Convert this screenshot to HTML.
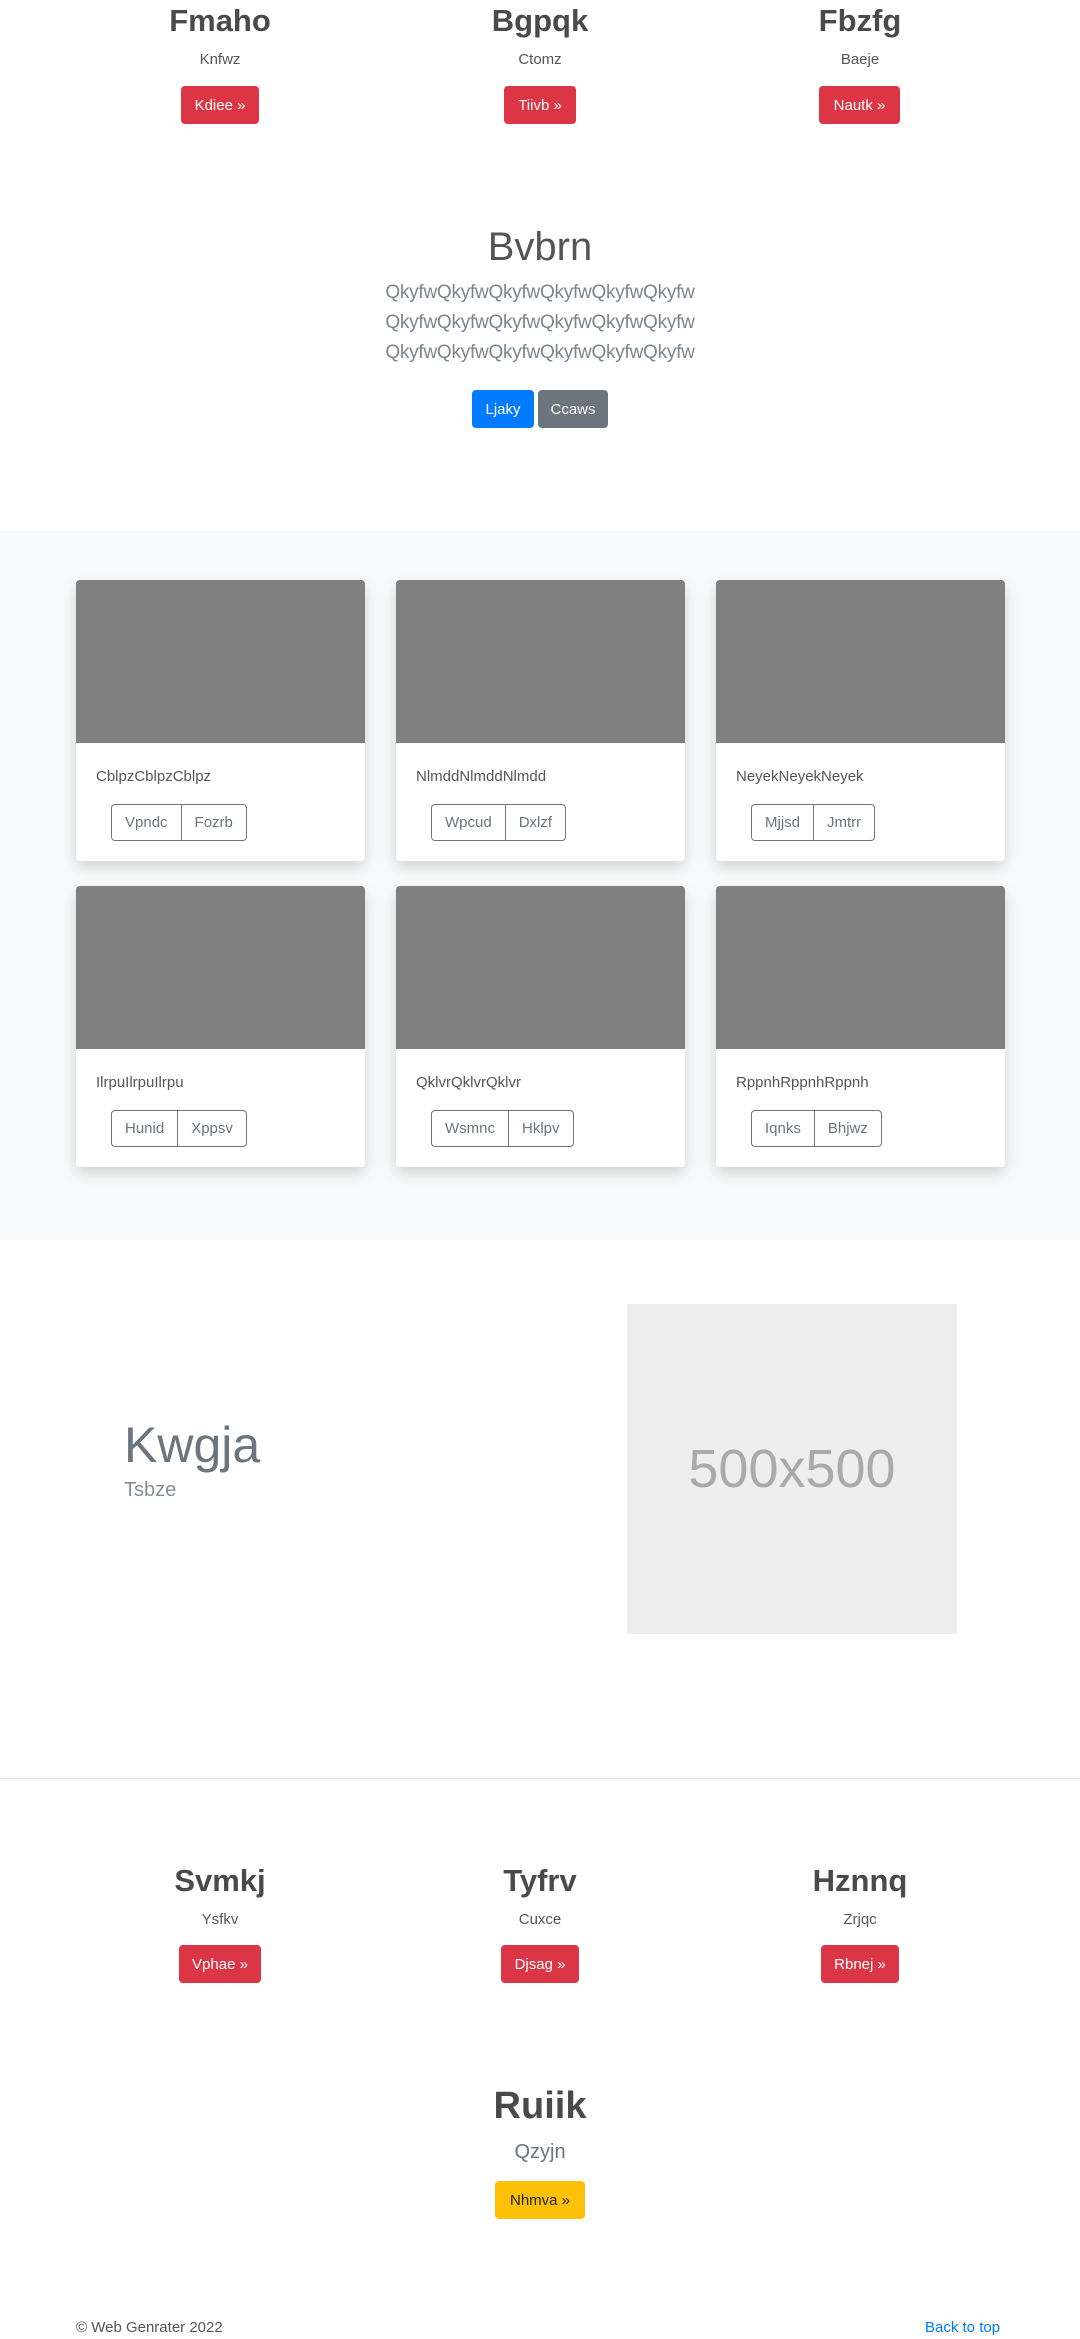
<!DOCTYPE html>
<html><head><meta charset="utf-8"><style>
*{box-sizing:border-box;margin:0;padding:0}
body{width:1080px;height:2339px;position:relative;background:#fff;font-family:"Liberation Sans",sans-serif;overflow:hidden;color:#555}
.a{position:absolute}
.c{text-align:center}
.h{font-size:31px;font-weight:bold;color:#4a4a4a}
.s{font-size:15px;color:#555}
.btn{position:absolute;border-radius:4px;color:#fff;font-size:15px;display:flex;align-items:center;justify-content:center}
.red{background:#dc3545}
.card{position:absolute;width:289px;height:281px;background:#fff;border-radius:4px;box-shadow:0 6px 14px rgba(0,0,0,.15);overflow:hidden}
.card .img{height:163px;background:#808080}
.card .t{position:absolute;left:20px;top:188px;font-size:15px;color:#555}
.bg{position:absolute;left:35px;top:224px;height:37px;border:1px solid #6c757d;border-radius:4px;display:flex;font-size:15px;color:#6c757d}
.bg span{padding:0 13px;display:flex;align-items:center}
.bg span+span{border-left:1px solid #6c757d}
</style></head><body>
<div class="a c h" style="left:120px;width:200px;top:3px">Fmaho</div>
<div class="a c h" style="left:440px;width:200px;top:3px">Bgpqk</div>
<div class="a c h" style="left:760px;width:200px;top:3px">Fbzfg</div>
<div class="a c s" style="left:120px;width:200px;top:51px">Knfwz</div>
<div class="a c s" style="left:440px;width:200px;top:51px">Ctomz</div>
<div class="a c s" style="left:760px;width:200px;top:51px">Baeje</div>
<div class="btn red" style="left:181px;top:86px;width:78px;height:38px">Kdiee »</div>
<div class="btn red" style="left:504px;top:86px;width:72px;height:38px">Tiivb »</div>
<div class="btn red" style="left:819px;top:86px;width:81px;height:38px">Nautk »</div>

<div class="a c" style="left:0;width:1080px;top:225px;font-size:40px;font-weight:300;color:#555">Bvbrn</div>
<div class="a c" style="left:0;width:1080px;top:278px;font-size:19px;line-height:30px;color:#7d858c;letter-spacing:-0.25px">QkyfwQkyfwQkyfwQkyfwQkyfwQkyfw<br>QkyfwQkyfwQkyfwQkyfwQkyfwQkyfw<br>QkyfwQkyfwQkyfwQkyfwQkyfwQkyfw</div>
<div class="btn" style="left:472px;top:390px;width:62px;height:38px;background:#007bff">Ljaky</div>
<div class="btn" style="left:538px;top:390px;width:70px;height:38px;background:#6c757d">Ccaws</div>

<div class="a" style="left:0;top:531px;width:1080px;height:709px;background:#f8f9fa"></div>
<div class="card" style="left:76px;top:580px"><div class="img"></div><div class="t">CblpzCblpzCblpz</div><div class="bg"><span>Vpndc</span><span>Fozrb</span></div></div>
<div class="card" style="left:396px;top:580px"><div class="img"></div><div class="t">NlmddNlmddNlmdd</div><div class="bg"><span>Wpcud</span><span>Dxlzf</span></div></div>
<div class="card" style="left:716px;top:580px"><div class="img"></div><div class="t">NeyekNeyekNeyek</div><div class="bg"><span>Mjjsd</span><span>Jmtrr</span></div></div>
<div class="card" style="left:76px;top:886px"><div class="img"></div><div class="t">IlrpuIlrpuIlrpu</div><div class="bg"><span>Hunid</span><span>Xppsv</span></div></div>
<div class="card" style="left:396px;top:886px"><div class="img"></div><div class="t">QklvrQklvrQklvr</div><div class="bg"><span>Wsmnc</span><span>Hklpv</span></div></div>
<div class="card" style="left:716px;top:886px"><div class="img"></div><div class="t">RppnhRppnhRppnh</div><div class="bg"><span>Iqnks</span><span>Bhjwz</span></div></div>

<div class="a" style="left:124px;top:1416px;font-size:50px;font-weight:300;color:#6c757d">Kwgja</div>
<div class="a" style="left:124px;top:1479px;font-size:20px;font-weight:300;color:#868e96">Tsbze</div>
<div class="a" style="left:627px;top:1304px;width:330px;height:330px;background:#eee;display:flex;align-items:center;justify-content:center;font-size:54px;color:#aaa">500x500</div>

<div class="a" style="left:0;top:1778px;width:1080px;height:1px;background:#e5e5e5"></div>
<div class="a c h" style="left:120px;width:200px;top:1863px">Svmkj</div>
<div class="a c h" style="left:440px;width:200px;top:1863px">Tyfrv</div>
<div class="a c h" style="left:760px;width:200px;top:1863px">Hznnq</div>
<div class="a c s" style="left:120px;width:200px;top:1911px">Ysfkv</div>
<div class="a c s" style="left:440px;width:200px;top:1911px">Cuxce</div>
<div class="a c s" style="left:760px;width:200px;top:1911px">Zrjqc</div>
<div class="btn red" style="left:179px;top:1945px;width:82px;height:38px">Vphae »</div>
<div class="btn red" style="left:501px;top:1945px;width:78px;height:38px">Djsag »</div>
<div class="btn red" style="left:821px;top:1945px;width:78px;height:38px">Rbnej »</div>

<div class="a c" style="left:0;width:1080px;top:2085px;font-size:38px;font-weight:bold;color:#4a4a4a">Ruiik</div>
<div class="a c" style="left:0;width:1080px;top:2141px;font-size:20px;font-weight:300;color:#6c757d">Qzyjn</div>
<div class="btn" style="left:495px;top:2181px;width:90px;height:38px;background:#ffc107;color:#212529">Nhmva »</div>

<div class="a" style="left:76px;top:2319px;font-size:15px;color:#555">© Web Genrater 2022</div>
<div class="a" style="left:925px;top:2319px;font-size:15px;color:#007bff">Back to top</div>
</body></html>
